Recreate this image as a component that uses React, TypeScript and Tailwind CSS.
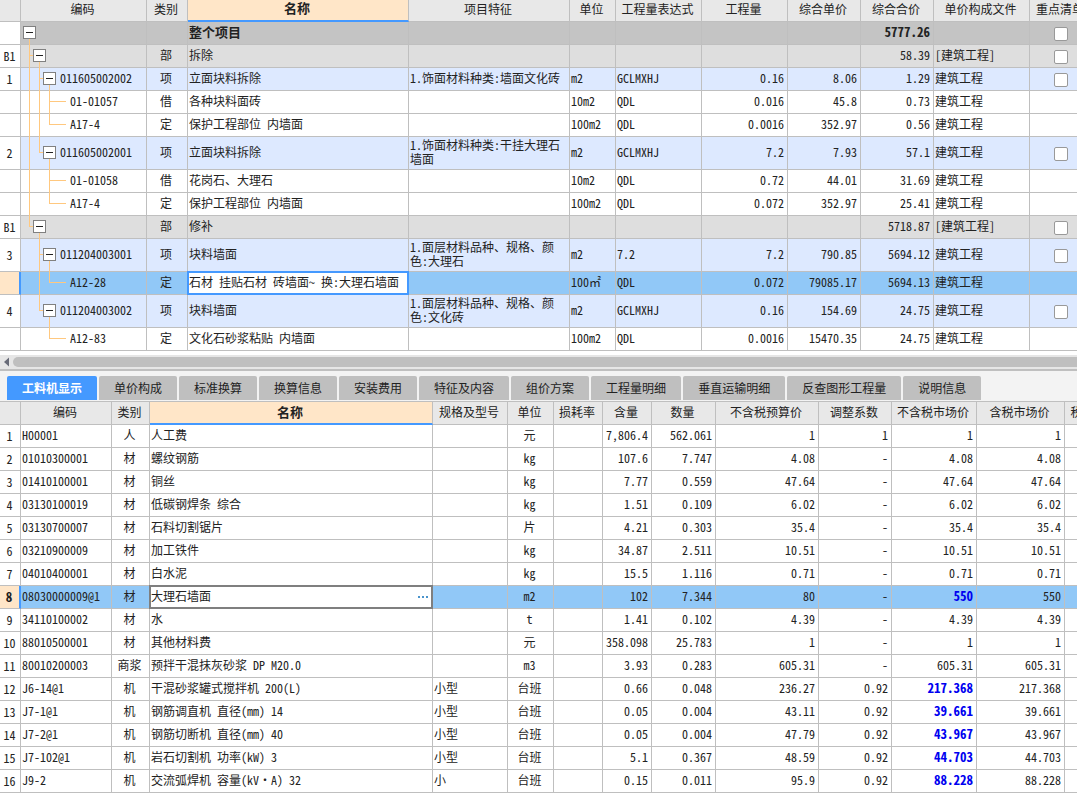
import { useState } from "react";
import clsx from "clsx";

type Kind = "root" | "section" | "item" | "leaf";

type BillRow = {
  no?: string;
  kind: Kind;
  level: number;
  // ancestor columns whose guide line runs through this row
  pass?: number[];
  last?: boolean;
  tall?: boolean;
  selected?: boolean;
  code?: string;
  type?: string;
  name: string;
  feature?: string;
  unit?: string;
  expr?: string;
  qty?: string;
  price?: string;
  total: string;
  file?: string;
};

const billRows: BillRow[] = [
  { kind: "root", level: 0, name: "整个项目", total: "5777.26" },
  { no: "B1", kind: "section", level: 1, type: "部", name: "拆除", total: "58.39", file: "[建筑工程]" },
  { no: "1", kind: "item", level: 2, pass: [0], code: "011605002002", type: "项", name: "立面块料拆除", feature: "1.饰面材料种类:墙面文化砖", unit: "m2", expr: "GCLMXHJ", qty: "0.16", price: "8.06", total: "1.29", file: "建筑工程" },
  { kind: "leaf", level: 3, pass: [0, 1], code: "01-01057", type: "借", name: "各种块料面砖", unit: "10m2", expr: "QDL", qty: "0.016", price: "45.8", total: "0.73", file: "建筑工程" },
  { kind: "leaf", level: 3, pass: [0, 1], last: true, code: "A17-4", type: "定", name: "保护工程部位 内墙面", unit: "100m2", expr: "QDL", qty: "0.0016", price: "352.97", total: "0.56", file: "建筑工程" },
  { no: "2", kind: "item", level: 2, pass: [0], last: true, tall: true, code: "011605002001", type: "项", name: "立面块料拆除", feature: "1.饰面材料种类:干挂大理石墙面", unit: "m2", expr: "GCLMXHJ", qty: "7.2", price: "7.93", total: "57.1", file: "建筑工程" },
  { kind: "leaf", level: 3, pass: [0], code: "01-01058", type: "借", name: "花岗石、大理石", unit: "10m2", expr: "QDL", qty: "0.72", price: "44.01", total: "31.69", file: "建筑工程" },
  { kind: "leaf", level: 3, pass: [0], last: true, code: "A17-4", type: "定", name: "保护工程部位 内墙面", unit: "100m2", expr: "QDL", qty: "0.072", price: "352.97", total: "25.41", file: "建筑工程" },
  { no: "B1", kind: "section", level: 1, last: true, type: "部", name: "修补", total: "5718.87", file: "[建筑工程]" },
  { no: "3", kind: "item", level: 2, tall: true, code: "011204003001", type: "项", name: "块料墙面", feature: "1.面层材料品种、规格、颜色:大理石", unit: "m2", expr: "7.2", qty: "7.2", price: "790.85", total: "5694.12", file: "建筑工程" },
  { kind: "leaf", level: 3, pass: [1], last: true, selected: true, code: "A12-28", type: "定", name: "石材 挂贴石材 砖墙面~ 换:大理石墙面", unit: "100㎡", expr: "QDL", qty: "0.072", price: "79085.17", total: "5694.13", file: "建筑工程" },
  { no: "4", kind: "item", level: 2, last: true, tall: true, code: "011204003002", type: "项", name: "块料墙面", feature: "1.面层材料品种、规格、颜色:文化砖", unit: "m2", expr: "GCLMXHJ", qty: "0.16", price: "154.69", total: "24.75", file: "建筑工程" },
  { kind: "leaf", level: 3, last: true, code: "A12-83", type: "定", name: "文化石砂浆粘贴 内墙面", unit: "100m2", expr: "QDL", qty: "0.0016", price: "15470.35", total: "24.75", file: "建筑工程" },
];

const tabs = [
  "工料机显示",
  "单价构成",
  "标准换算",
  "换算信息",
  "安装费用",
  "特征及内容",
  "组价方案",
  "工程量明细",
  "垂直运输明细",
  "反查图形工程量",
  "说明信息",
];

// code, type, name, spec, unit, content, quantity, budget price, factor, market price (ex. tax), market price (incl. tax)
const resources = [
  ["H00001", "人", "人工费", "", "元", "7,806.4", "562.061", "1", "1", "1", "1"],
  ["01010300001", "材", "螺纹钢筋", "", "kg", "107.6", "7.747", "4.08", "-", "4.08", "4.08"],
  ["01410100001", "材", "铜丝", "", "kg", "7.77", "0.559", "47.64", "-", "47.64", "47.64"],
  ["03130100019", "材", "低碳钢焊条 综合", "", "kg", "1.51", "0.109", "6.02", "-", "6.02", "6.02"],
  ["03130700007", "材", "石料切割锯片", "", "片", "4.21", "0.303", "35.4", "-", "35.4", "35.4"],
  ["03210900009", "材", "加工铁件", "", "kg", "34.87", "2.511", "10.51", "-", "10.51", "10.51"],
  ["04010400001", "材", "白水泥", "", "kg", "15.5", "1.116", "0.71", "-", "0.71", "0.71"],
  ["08030000009@1", "材", "大理石墙面", "", "m2", "102", "7.344", "80", "-", "550", "550"],
  ["34110100002", "材", "水", "", "t", "1.41", "0.102", "4.39", "-", "4.39", "4.39"],
  ["88010500001", "材", "其他材料费", "", "元", "358.098", "25.783", "1", "-", "1", "1"],
  ["80010200003", "商浆", "预拌干混抹灰砂浆 DP M20.0", "", "m3", "3.93", "0.283", "605.31", "-", "605.31", "605.31"],
  ["J6-14@1", "机", "干混砂浆罐式搅拌机 200(L)", "小型", "台班", "0.66", "0.048", "236.27", "0.92", "217.368", "217.368"],
  ["J7-1@1", "机", "钢筋调直机 直径(mm) 14", "小型", "台班", "0.05", "0.004", "43.11", "0.92", "39.661", "39.661"],
  ["J7-2@1", "机", "钢筋切断机 直径(mm) 40", "小型", "台班", "0.05", "0.004", "47.79", "0.92", "43.967", "43.967"],
  ["J7-102@1", "机", "岩石切割机 功率(kW) 3", "小型", "台班", "5.1", "0.367", "48.59", "0.92", "44.703", "44.703"],
  ["J9-2", "机", "交流弧焊机 容量(kV·A) 32", "小", "台班", "0.15", "0.011", "95.9", "0.92", "88.228", "88.228"],
];

const rowBg: Record<Kind, string> = {
  root: "bg-[#c4c4c4]",
  section: "bg-[#dedede]",
  item: "bg-[#dde9ff]",
  leaf: "bg-white",
};

const cell = "border-r border-b border-[#bfbfbf] pl-px pr-[3px] pb-[3px] whitespace-nowrap";
const head = "border-r border-b border-[#bfbfbf] bg-[#e8e8e8] pr-0.5 font-normal whitespace-nowrap";
const headActive = "border-r border-b-2 border-r-[#bfbfbf] border-b-[#4499ff] bg-[#ffe6c8] pr-0.5 text-[13px] font-bold";

function TreeCell({ row }: { row: BillRow }) {
  const h = row.tall ? 32 : 22;
  const mid = row.tall ? 15 : 10;
  const leaf = row.kind === "leaf";
  const x = (level: number) => 8 + level * 10;
  const parent = x(row.level - 1);

  return (
    <div className={clsx("flex items-center pb-px", row.tall ? "h-8" : "h-[22px]")}>
      <svg
        width={leaf ? 49 : 2 + row.level * 10}
        height={h}
        className="shrink-0 self-start overflow-visible fill-[#ffc87f]"
        aria-hidden="true"
      >
        {row.pass?.map((p) => (
          <rect key={p} x={x(p)} y={0} width={1} height={h + 1} />
        ))}
        {row.level > 0 && (
          <>
            <rect x={parent} y={0} width={1} height={row.last ? mid + 1 : h + 1} />
            <rect x={parent} y={mid} width={leaf ? 17 : 4} height={1} />
          </>
        )}
        {!leaf && <rect x={x(row.level)} y={mid + 7} width={1} height={h - mid - 6} />}
      </svg>
      {!leaf && (
        <button
          type="button"
          aria-label="折叠"
          className="mr-1 flex size-[13px] shrink-0 items-center justify-center border border-[#808080] bg-white"
        >
          <span className="h-px w-[7px] bg-[#222]"></span>
        </button>
      )}
      <span className="pb-0.5">{row.code}</span>
    </div>
  );
}

function BillTable() {
  return (
    <div className="overflow-hidden">
      <table className="w-full min-w-[1093px] table-fixed border-separate border-spacing-0">
        <colgroup>
          <col className="w-[21px]" />
          <col className="w-[126px]" />
          <col className="w-[41px]" />
          <col />
          <col className="w-[161px]" />
          <col className="w-[46px]" />
          <col className="w-[86px]" />
          <col className="w-[86px]" />
          <col className="w-[73px]" />
          <col className="w-[73px]" />
          <col className="w-[96px]" />
          <col className="w-[63px]" />
        </colgroup>
        <thead>
          <tr className="h-[22px]">
            <th className={head}></th>
            <th className={clsx(head, "pb-1")}>编码</th>
            <th className={clsx(head, "pb-1")}>类别</th>
            <th className={clsx(headActive, "pb-1")}>名称</th>
            {["项目特征", "单位", "工程量表达式", "工程量", "综合单价", "综合合价", "单价构成文件", "重点清单"].map((t) => (
              <th key={t} className={clsx(head, "pb-1")}>{t}</th>
            ))}
          </tr>
        </thead>
        <tbody>
          {billRows.map((r, i) => (
            <tr
              key={i}
              className={clsx(
                r.tall ? "h-[33px]" : "h-[23px]",
                r.selected ? "bg-[#91c8f7]" : rowBg[r.kind],
                r.kind === "root" && "text-[13px] font-bold"
              )}
            >
              <td
                className={clsx(
                  "border-b border-b-[#bfbfbf] pr-px text-center",
                  r.selected ? "border-r-2 border-r-[#4499ff] bg-[#ffe6c8]" : "border-r border-r-[#bfbfbf] bg-white"
                )}
              >
                {r.no}
              </td>
              <td className="border-r border-b border-[#bfbfbf]">
                <TreeCell row={r} />
              </td>
              <td className={clsx(cell, "text-center")}>{r.type}</td>
              {r.selected ? (
                <td className="border-r border-b border-[#bfbfbf]">
                  <input
                    aria-label="名称"
                    defaultValue={r.name}
                    className="block h-[22px] w-full bg-white pl-px pb-[3px] outline-2 -outline-offset-1 outline-[#4499ff]"
                  />
                </td>
              ) : (
                <td className={cell}>{r.name}</td>
              )}
              <td className="border-r border-b border-[#bfbfbf] pl-px pb-[3px]">{r.feature}</td>
              <td className={cell}>{r.unit}</td>
              <td className={cell}>{r.expr}</td>
              <td className={clsx(cell, "text-right")}>{r.qty}</td>
              <td className={clsx(cell, "text-right")}>{r.price}</td>
              <td className={clsx(cell, "text-right")}>{r.total}</td>
              <td className={cell}>{r.file}</td>
              <td className="border-r border-b border-[#bfbfbf] pt-px">
                {r.kind !== "leaf" && (
                  <input
                    type="checkbox"
                    aria-label="重点清单"
                    className="mx-auto block size-3.5 appearance-none rounded-xs border border-[#999] bg-white checked:bg-[#4499ff]"
                  />
                )}
              </td>
            </tr>
          ))}
        </tbody>
      </table>
    </div>
  );
}

function ScrollBar() {
  return (
    <div className="mt-1 flex h-4 items-center gap-1 overflow-hidden border-b-2 border-[#bfbfbf] bg-[#e6e6e6] pl-1">
      <svg width="5" height="10" viewBox="0 0 5 10" className="fill-[#686b78]" aria-hidden="true">
        <path d="M5 0.5v9L0 5z" />
      </svg>
      <div className="h-2.5 flex-1 rounded-l-full bg-[#bfbfbf]"></div>
    </div>
  );
}

function ResourceTable() {
  return (
    <div className="overflow-hidden border-t border-[#bfbfbf]">
      <table className="w-full min-w-[1103px] table-fixed border-separate border-spacing-0">
        <colgroup>
          <col className="w-[21px]" />
          <col className="w-[91px]" />
          <col className="w-[38px]" />
          <col />
          <col className="w-[75px]" />
          <col className="w-[46px]" />
          <col className="w-[49px]" />
          <col className="w-[49px]" />
          <col className="w-[64px]" />
          <col className="w-[103px]" />
          <col className="w-[73px]" />
          <col className="w-[85px]" />
          <col className="w-[88px]" />
          <col className="w-[38px]" />
        </colgroup>
        <thead>
          <tr className="h-[23px]">
            <th className={head}></th>
            <th className={clsx(head, "pb-0.5")}>编码</th>
            <th className={clsx(head, "pb-0.5")}>类别</th>
            <th className={clsx(headActive, "pb-0.5")}>名称</th>
            {["规格及型号", "单位", "损耗率", "含量", "数量", "不含税预算价", "调整系数", "不含税市场价", "含税市场价", "税率"].map((t) => (
              <th key={t} className={clsx(head, "pb-0.5")}>{t}</th>
            ))}
          </tr>
        </thead>
        <tbody>
          {resources.map(([code, type, name, spec, unit, content, qty, budget, factor, market, taxed], i) => {
            const selected = i === 7;
            // prices edited by hand are shown in bold blue
            const edited = selected || i > 10;
            return (
              <tr key={code} className={clsx("h-[23px]", selected && "bg-[#91c8f7]")}>
                <td
                  className={clsx(
                    "border-b border-b-[#bfbfbf] pr-px text-center",
                    selected
                      ? "border-r-2 border-r-[#4499ff] bg-[#ffe6c8] text-[13px] font-bold"
                      : "border-r border-r-[#bfbfbf]"
                  )}
                >
                  {i + 1}
                </td>
                <td className={cell}>{code}</td>
                <td className={clsx(cell, "text-center")}>{type}</td>
                {selected ? (
                  <td className="border-r border-b border-[#bfbfbf]">
                    <div className="flex h-[22px] items-center bg-white pr-1 outline-2 -outline-offset-1 outline-[#7f7f7f]">
                      <input
                        aria-label="名称"
                        defaultValue={name}
                        className="min-w-0 flex-1 bg-transparent pl-px pb-[3px] outline-none"
                      />
                      <button type="button" aria-label="选择材料" className="flex gap-0.5">
                        <span className="size-0.5 bg-[#4a94cc]"></span>
                        <span className="size-0.5 bg-[#4a94cc]"></span>
                        <span className="size-0.5 bg-[#4a94cc]"></span>
                      </button>
                    </div>
                  </td>
                ) : (
                  <td className={cell}>{name}</td>
                )}
                <td className={cell}>{spec}</td>
                <td className={clsx(cell, "text-center")}>{unit}</td>
                <td className={cell}></td>
                <td className={clsx(cell, "text-right")}>{content}</td>
                <td className={clsx(cell, "text-right")}>{qty}</td>
                <td className={clsx(cell, "text-right")}>{budget}</td>
                <td className={clsx(cell, "text-right")}>{factor}</td>
                <td className={clsx(cell, "text-right", edited && "text-[13px] font-bold text-[#0000f0]")}>{market}</td>
                <td className={clsx(cell, "text-right")}>{taxed}</td>
                <td className={cell}></td>
              </tr>
            );
          })}
        </tbody>
      </table>
    </div>
  );
}

export default function App() {
  const [active, setActive] = useState(0);

  return (
    <main className="min-h-screen bg-white font-['Noto_Sans_CJK_SC',sans-serif] text-xs leading-[14px] text-[#222] [font-feature-settings:'hwid']">
      <BillTable />
      <ScrollBar />

      <div role="tablist" className="flex h-[30px] gap-0.5 overflow-hidden bg-[#f3f3f3] pt-[5px] pl-[7px]">
        {tabs.map((t, i) => (
          <button
            key={t}
            type="button"
            role="tab"
            aria-selected={active === i}
            onClick={() => setActive(i)}
            className={clsx(
              "h-6 shrink-0 rounded-t-xs px-[15px] cursor-pointer",
              active === i ? "bg-[#4499ff] font-bold text-white" : "bg-[#bfbfbf]"
            )}
          >
            {t}
          </button>
        ))}
      </div>

      <ResourceTable />
    </main>
  );
}
